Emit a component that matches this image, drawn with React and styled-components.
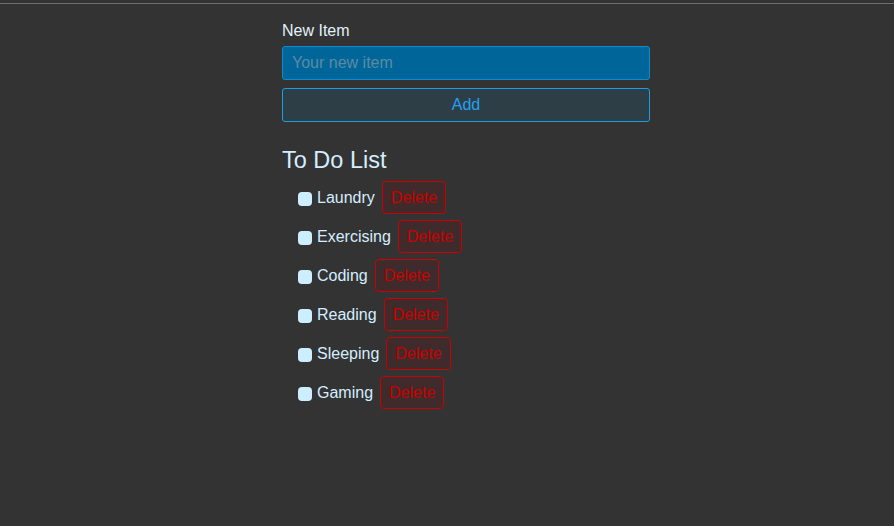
import React, { useState } from "react";
import styled, { createGlobalStyle } from "styled-components";

const GlobalStyle = createGlobalStyle`
    body{
        margin: 0;
        background-color: #333333;
        font-family: "Liberation Sans", Arial, sans-serif;
        color: #d4eeff;
    }
`

const Page = styled.div`
    margin-top: 3px;
    border-top: 1px solid #6e6e6e;
    min-height: 522px;
    padding-left: 282px;
    box-sizing: border-box;
`

const Form = styled.div`
    width: 368px;
    padding-top: 18px;
    display: flex;
    flex-direction: column;
`

const Label = styled.label`
    font-size: 16px;
    line-height: 18px;
    color: #e2f1fc;
    margin-bottom: 6px;
`

const Input = styled.input`
    height: 34px;
    box-sizing: border-box;
    border: 1px solid #0a8cd0;
    border-radius: 3px;
    background-color: #006699;
    color: #e2f1fc;
    font-family: inherit;
    font-size: 16px;
    padding: 0 9px;
    outline: none;
    &::placeholder{
        color: #5c8aa3;
    }
`

const AddButton = styled.button`
    margin-top: 8px;
    height: 34px;
    box-sizing: border-box;
    border: 1px solid #1a9ee2;
    border-radius: 3px;
    background-color: #2e3e47;
    color: #1ea2f2;
    font-family: inherit;
    font-size: 16px;
`

const Title = styled.h2`
    margin: 24px 0 4px;
    font-size: 23.5px;
    font-weight: normal;
    line-height: 28px;
    color: #d4eeff;
`

const List = styled.ul`
    list-style: none;
    margin: 0;
    padding: 0 0 0 16px;
`

const Row = styled.li`
    height: 39px;
    display: flex;
    align-items: center;
    font-size: 16px;
`

const Check = styled.input`
    appearance: none;
    width: 14px;
    height: 14px;
    margin: 2px 5px 0 0;
    border-radius: 4px;
    background-color: #cdeeff;
`

const DeleteButton = styled.button`
    margin-left: 7px;
    height: 33px;
    box-sizing: border-box;
    padding: 0 8px;
    border: 1.5px solid #cc0000;
    border-radius: 4px;
    background-color: #3f2b2b;
    color: #c80000;
    font-family: inherit;
    font-size: 16px;
`

const items = ["Laundry", "Exercising", "Coding", "Reading", "Sleeping", "Gaming"];

const App = () => {
    const [todos, setTodos] = useState(items);
    const [text, setText] = useState("");

    return (
        <>
            <GlobalStyle />
            <Page>
                <Form>
                    <Label htmlFor="item">New Item</Label>
                    <Input id="item" type="text" placeholder="Your new item"
                        value={text} onChange={(e) => setText(e.target.value)} />
                    <AddButton onClick={() => { if (text) { setTodos([...todos, text]); setText(""); } }}>
                        Add
                    </AddButton>
                </Form>
                <Title>To Do List</Title>
                <List>
                    {todos.map((t, i) => (
                        <Row key={i}>
                            <Check type="checkbox" />
                            {t}
                            <DeleteButton onClick={() => setTodos(todos.filter((_, j) => j !== i))}>
                                Delete
                            </DeleteButton>
                        </Row>
                    ))}
                </List>
            </Page>
        </>
    );
};

export default App;
